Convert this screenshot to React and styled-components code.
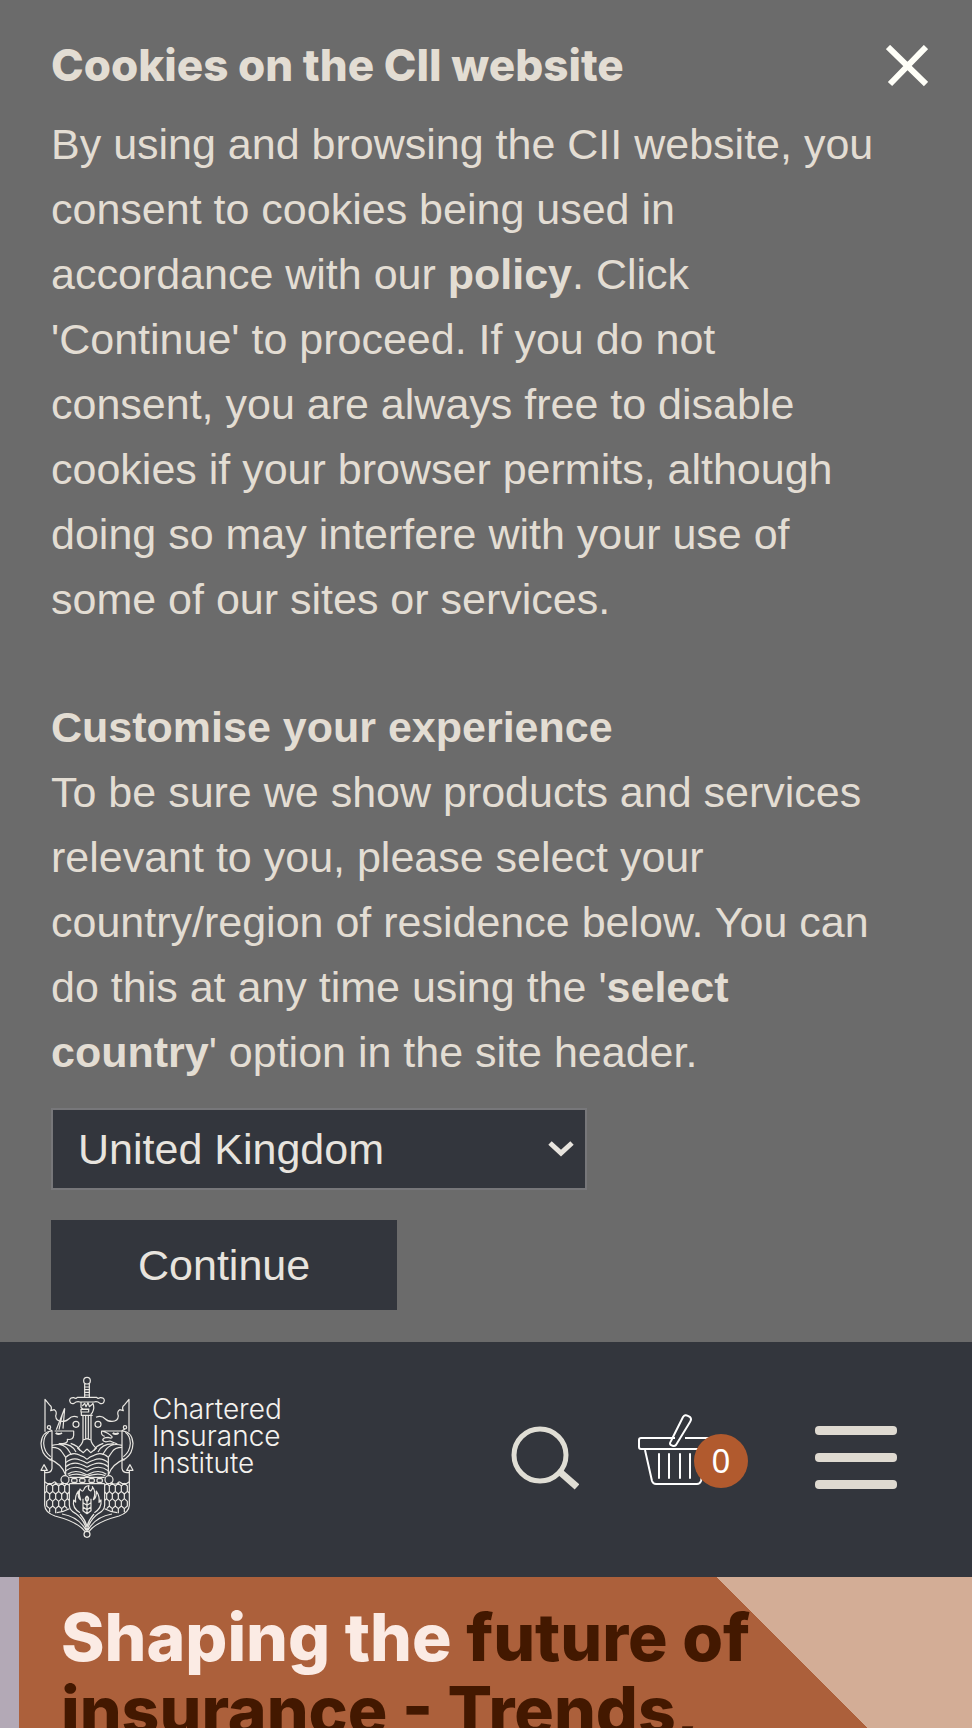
import React, { useState } from 'react'
import styled, { createGlobalStyle } from 'styled-components'

const countries = ['United Kingdom', 'Ireland', 'Hong Kong', 'India', 'United Arab Emirates', 'Rest of world']

// one side of the crest, the other side is the same drawing flipped
const CrestSide = () => (
  <>
    <path d="M164 72 V112 H142 Q138 117 132 113 Q119 112 119 122 Q121 133 132 130 Q140 123 150 126 H171" />
    <path d="M163 81 H171 M163 89 H171 M163 97 H171 M163 105 H171 M163 112 H171" />
    <path d="M45 215 V118 L58 134 Q68 140 62 152 L73 149 Q82 154 77 168 Q78 184 96 184 Q110 184 116 177 Q128 164 144 172" />
    <circle cx="138" cy="193" r="9" />
    <circle cx="57" cy="202" r="5" />
    <path d="M57 207 L66 212 V290 Q66 300 58 300 M66 290 V325 Q64 338 50 338 H44" />
    <path d="M66 213 Q36 214 33 250 Q34 282 56 296 Q96 312 107 345" />
    <path d="M56 217 Q42 226 41 250 Q42 276 62 290" />
    <path d="M42 314 L33 331 H52 Z" />
    <path d="M44 331 V436 Q45 458 75 468 Q145 486 165 515" />
    <path d="M44 365 L53 371 H65 L74 365 M74 365 L82 372 H94 L100 366" />
    <path d="M66 262 Q88 262 96 276 L107 292 M66 256 Q96 248 112 266 Q122 280 124 285 M90 252 Q125 250 138 276 M122 250 Q146 258 150 272" />
    <path d="M107 345 V292 Q128 274 150 286 Q163 290 171 298" />
    <path d="M107 308 Q128 290 150 300 Q163 304 171 310 M107 320 Q128 304 150 312 Q163 316 171 322 M107 332 Q128 317 150 324 Q163 328 171 334 M113 343 Q128 331 150 336 Q163 340 171 345" />
    <path d="M116 347 Q134 340 152 344 Q164 346 171 350" />
    <circle cx="105" cy="359" r="12" />
    <path d="M118 352 H171 M118 371 H171" />
    <rect x="125" y="356" width="16" height="11" rx="3" />
    <rect x="149" y="356" width="16" height="11" rx="3" />
    <path d="M118 371 V436 Q119 452 136 460 Q162 478 171 512 M118 446 Q100 456 80 458 M150 462 Q166 480 171 500 M96 462 Q146 470 169 512" />
    <path d="M50 378 L59 370 L68 378 V394 L59 402 L50 394 Z M68 378 L77 370 L86 378 M86 378 V394 L77 402 L68 394 M86 378 L95 370 L104 378 V394 L95 402 L86 394 M104 378 L111 370 L118 376 M104 394 L112 402 L118 396" />
    <path d="M59 402 V416 M77 402 V416 M95 402 V416 M112 402 V416 M50 394 L44 399 M50 424 L59 416 L68 424 V438 L59 446 L50 438 Z M68 424 L77 416 L86 424 V438 L77 446 L68 438 M86 424 L95 416 L104 424 V438 L95 446 L86 438 M104 424 L112 416 L118 421 M104 438 L112 446 M59 446 V456 M77 446 V460 M95 446 V456" />
    <path d="M159 166 V239 Q159 250 143 265 L160 278 L171 267 M167 168 V238 M159 240 L171 236" />
  </>
)

const Crest = () => (
  <CrestSvg viewBox="24 45 294 495" aria-hidden="true">
    <circle cx="171" cy="62" r="10" />
    <CrestSide />
    <g transform="translate(342 0) scale(-1 1)"><CrestSide /></g>
    <path d="M153 126 V142 L158 147 H178 M157 138 L164 130 L168 140 L174 128 L178 140 L188 132 M188 128 Q195 142 187 158 L182 164 M153 148 H176 V156 H153 Z M154 156 V166 H188" />
    <path d="M104 145 L79 209 M104 145 L99 206 M97 163 L87 209" />
    <path d="M74 213 H131 V226 Q130 241 112 238 Q115 249 99 251 H86" />
    <path d="M77 219 Q86 225 96 219" strokeWidth="6" />
    <path d="M276 213 H215 Q212 226 224 229 M215 213 Q236 218 246 230 Q248 237 234 232 Q220 232 218 240 Q222 249 240 243 Q250 248 262 252" />
    <path d="M248 219 Q257 225 266 219" strokeWidth="6" />
    <path d="M150 458 Q126 444 131 420 L137 426 Q134 407 145 393 Q142 413 152 420 Q145 398 150 387 Q158 399 162 388 Q165 378 177 377 Q172 388 182 393 Q190 384 187 380 Q200 396 190 419 Q200 414 199 393 Q210 410 207 427 L213 420 Q216 444 193 458" />
    <path d="M171 408 V460 M171 408 Q161 416 171 425 Q181 416 171 408 M159 416 V428 L171 436 L183 428 V416 M159 429 V441 L171 449 L183 441 V429 M159 442 V452 L171 461 L183 452 V442" />
    <circle cx="171" cy="523" r="9" />
  </CrestSvg>
)

const CookieBanner = ({ onClose }) => (
  <Banner>
    <BannerText>
      <BannerTitle>Cookies on the CII website</BannerTitle>
      <Copy>
        By using and browsing the CII website, you consent to cookies being used in
        accordance with our <PolicyLink href="#policy">policy</PolicyLink>. Click
        'Continue' to proceed. If you do not consent, you are always free to disable
        cookies if your browser permits, although doing so may interfere with your use of
        some of our sites or services.
      </Copy>
      <SubTitle>Customise your experience</SubTitle>
      <Copy>
        To be sure we show products and services relevant to you, please select your
        country/region of residence below. You can do this at any time using the
        {' '}'<strong>select country</strong>' option in the site header.
      </Copy>
      <SelectWrapper>
        <CountrySelect aria-label="Country/region of residence" defaultValue="United Kingdom">
          {countries.map((country) => (
            <option key={country}>{country}</option>
          ))}
        </CountrySelect>
        <Chevron viewBox="0 0 26 18" aria-hidden="true">
          <path d="M2 3 L13 13 L24 3" />
        </Chevron>
      </SelectWrapper>
      <ContinueButton type="button" onClick={onClose}>Continue</ContinueButton>
    </BannerText>
    <CloseButton type="button" aria-label="Close" onClick={onClose}>
      <svg viewBox="0 0 42 42" width="42" height="42">
        <path d="M2 2 L40 39 M40 2 L4 39" fill="none" stroke="#fffff8" strokeWidth="6" />
      </svg>
    </CloseButton>
  </Banner>
)

const SiteHeader = () => (
  <Header>
    <LogoLink href="#home">
      <Crest />
      <LogoText>
        Chartered<br />Insurance<br />Institute
      </LogoText>
    </LogoLink>
    <Tools>
      <IconButton type="button" aria-label="Search">
        <svg viewBox="0 0 68 87" width="68" height="87">
          <circle cx="29" cy="41" r="26" fill="none" stroke="#e0ded5" strokeWidth="5" />
          <path d="M49 58 L66 73" stroke="#e0ded5" strokeWidth="7" />
        </svg>
      </IconButton>
      <BasketLink href="#basket" aria-label="Basket, 0 items">
        <svg viewBox="0 0 110 87" width="110" height="87" fill="none" stroke="#ffffff" strokeWidth="2">
          <path d="M37 24 H3 Q1 24 1 26 V33 Q1 35 3 35 H80 V24 H47" />
          <path d="M7 36 L14 67 Q15 70 18 70 H59 Q62 70 63 67 L70 36" />
          <path d="M21 40 V64 M31 40 V64 M42 40 V64 M52 40 V64" strokeLinecap="round" />
          <path d="M45 3 Q47 0 50 2 L52 3 Q54 5 52 8 L38 31 Q36 33 33 31 Q31 30 33 27 Z" />
        </svg>
        <Badge>0</Badge>
      </BasketLink>
      <MenuButton type="button" aria-label="Menu">
        <MenuBar />
        <MenuBar />
        <MenuBar />
      </MenuButton>
    </Tools>
  </Header>
)

const App = () => {
  const [showCookies, setShowCookies] = useState(true)

  return (
    <Page>
      <GlobalStyle />
      {showCookies && <CookieBanner onClose={() => setShowCookies(false)} />}
      <SiteHeader />
      <Hero>
        <HeroPanel>
          <HeroTitle>
            <span>Shaping the</span> future of<br />insurance - Trends,
          </HeroTitle>
        </HeroPanel>
      </Hero>
    </Page>
  )
}

export default App

const GlobalStyle = createGlobalStyle`
* {
  box-sizing: border-box;
}
body {
  margin: 0;
  font-family: "Liberation Sans", Arial, sans-serif;
  background: #6b6b6b;
}
`

const Page = styled.div`
display: flex;
flex-direction: column;
min-height: 100vh;
`

const Banner = styled.section`
display: flex;
align-items: flex-start;
padding: 33px 44px 32px 51px;
background: #6b6b6b;
color: #e3ddd3;
`

const BannerText = styled.div`
flex: 1;
min-width: 0;
font-size: 43px;
line-height: 65px;
`

const BannerTitle = styled.h2`
margin: 0 0 14px;
font-family: Inter, sans-serif;
font-size: 44px;
font-weight: 800;
line-height: 65px;
`

const Copy = styled.p`
margin: 0;
`

const SubTitle = styled.h3`
margin: 63px 0 0;
font-size: 43px;
line-height: 65px;
`

const PolicyLink = styled.a`
color: inherit;
font-weight: 700;
text-decoration: none;
`

const SelectWrapper = styled.div`
display: grid;
align-items: center;
width: 536px;
max-width: 100%;
margin-top: 23px;
`

const CountrySelect = styled.select`
grid-area: 1 / 1;
appearance: none;
height: 82px;
padding: 0 25px;
border: 2px solid #77777a;
border-radius: 0;
background: #33363d;
color: #e8e4de;
font-family: inherit;
font-size: 43px;
`

const Chevron = styled.svg`
grid-area: 1 / 1;
justify-self: end;
width: 26px;
height: 18px;
margin-right: 13px;
fill: none;
stroke: #e8e4de;
stroke-width: 5;
pointer-events: none;
`

const ContinueButton = styled.button`
display: block;
height: 90px;
margin-top: 30px;
padding: 0 87px;
border: 0;
background: #33363d;
color: #e8e4de;
font-family: inherit;
font-size: 43px;
`

const CloseButton = styled.button`
display: flex;
margin-top: 12px;
padding: 0;
border: 0;
background: none;
`

const Header = styled.header`
display: flex;
align-items: center;
justify-content: space-between;
padding: 33px 75px 37px 38px;
background: #33363d;
`

const LogoLink = styled.a`
display: flex;
gap: 16px;
color: #f4f2ee;
text-decoration: none;
`

const CrestSvg = styled.svg`
width: 98px;
height: 165px;
fill: none;
stroke: #e9e7e2;
stroke-width: 3.6;
stroke-linejoin: round;
`

const LogoText = styled.span`
padding-top: 21px;
font-family: Inter, sans-serif;
font-size: 28px;
font-weight: 300;
line-height: 27px;
`

const Tools = styled.div`
display: flex;
align-items: center;
`

const IconButton = styled.button`
display: flex;
margin-right: 59px;
padding: 0;
border: 0;
background: none;
`

const BasketLink = styled.a`
position: relative;
display: flex;
margin-right: 67px;
`

const Badge = styled.span`
position: absolute;
top: 20px;
right: 0;
width: 54px;
height: 54px;
border-radius: 50%;
background: #b15a2e;
color: #ffffff;
font-family: "Noto Sans", sans-serif;
font-size: 33px;
line-height: 54px;
text-align: center;
`

const MenuButton = styled.button`
display: flex;
flex-direction: column;
gap: 18px;
width: 82px;
padding: 0;
border: 0;
background: none;
`

const MenuBar = styled.span`
height: 9px;
border-radius: 4px;
background: #dfdad1;
`

const Hero = styled.main`
display: flex;
flex: 1 0 151px;
min-height: 0;
overflow: hidden;
padding-left: 19px;
background: #b3a9b6;
`

const HeroPanel = styled.div`
flex: 1;
padding: 24px 42px 0;
background: linear-gradient(45deg, #ac603b 50%, #d3ad96 50%) 697px 0 / 256px 256px no-repeat #ac603b;
`

const HeroTitle = styled.h1`
margin: 0;
color: #431800;
font-family: Inter, sans-serif;
font-size: 66px;
font-weight: 800;
line-height: 73px;

span {
  color: #fbebe4;
}
`
